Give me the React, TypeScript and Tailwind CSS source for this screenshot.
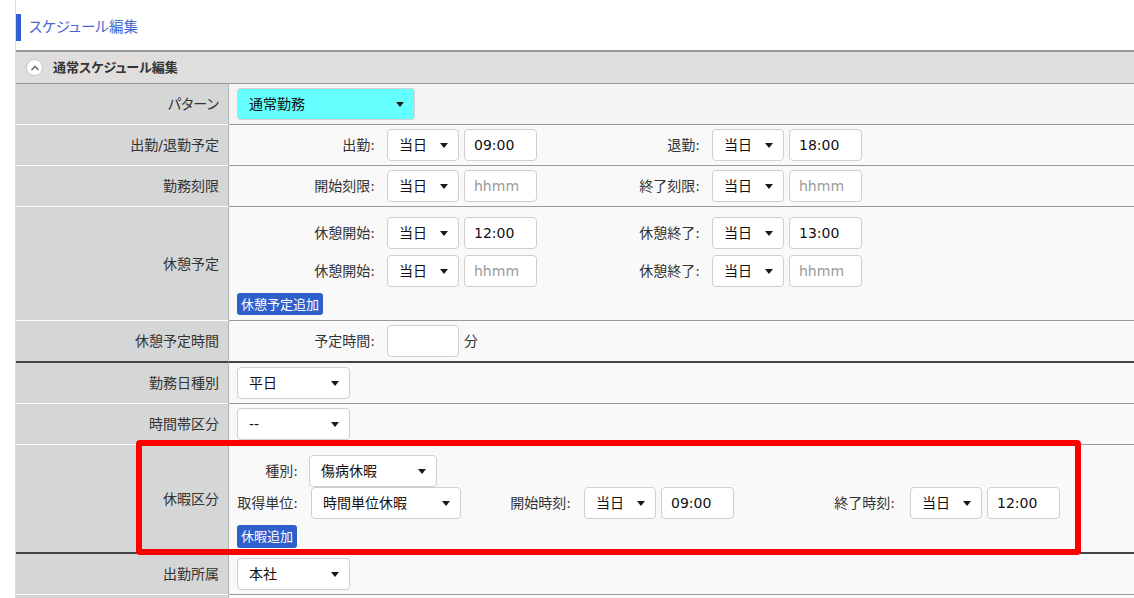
import React from 'react';

// ----------------------------------------------------------------------------
// Small form pieces
// ----------------------------------------------------------------------------

function Caret() {
  return (
    <svg width="8" height="5" viewBox="0 0 8 5" className="shrink-0">
      <path d="M0 0h8L4 5z" fill="#1a1a1a" />
    </svg>
  );
}

interface SelectProps {
  value: string;
  className: string;
}

function Select({ value, className }: SelectProps) {
  return (
    <div
      className={`h-[32px] shrink-0 border border-[#cfcfcf] rounded-[4px] flex items-center justify-between pl-[11px] pr-[10px] text-[14px] text-[#111] ${className}`}
    >
      <span>{value}</span>
      <Caret />
    </div>
  );
}

function TimeInput({ value }: { value?: string }) {
  return (
    <div className="w-[73px] h-[32px] shrink-0 bg-white border border-[#cfcfcf] rounded-[4px] flex items-center pl-[9px] text-[14px]">
      {value ? <span className="text-[#111]">{value}</span> : <span className="text-[#9a9a9a]">hhmm</span>}
    </div>
  );
}

function DayTime({ value }: { value?: string }) {
  return (
    <div className="flex gap-[5px]">
      <Select value="当日" className="w-[72px] bg-white" />
      <TimeInput value={value} />
    </div>
  );
}

function TimeGroup({ label, value }: { label: string; value?: string }) {
  return (
    <div className="w-[325px] shrink-0 flex items-center">
      <span className="w-[146px] text-right text-[#333]">{label}</span>
      <div className="ml-[12px]">
        <DayTime value={value} />
      </div>
    </div>
  );
}

// ----------------------------------------------------------------------------
// Table row
// ----------------------------------------------------------------------------

interface RowProps {
  label?: string;
  thick?: boolean;
  contentClass?: string;
  bgClass?: string;
  children?: React.ReactNode;
}

function Row({ label, thick, contentClass = 'h-[40px] flex items-center pl-[8px]', bgClass = 'bg-[#f9f9f9]', children }: RowProps) {
  return (
    <div className="flex">
      <div
        className={`w-[213px] shrink-0 bg-[#d5d6d6] border-r border-r-[#b4b4b4] flex items-center justify-end pr-[9px] text-[#333] ${
          thick ? 'border-b-2 border-b-[#444]' : 'border-b border-b-white'
        }`}
      >
        {label}
      </div>
      <div className={`flex-1 ${bgClass} ${thick ? 'border-b-2 border-b-[#444]' : 'border-b border-b-[#9a9a9a]'}`}>
        <div className={contentClass}>{children}</div>
      </div>
    </div>
  );
}

// ----------------------------------------------------------------------------
// Page
// ----------------------------------------------------------------------------

export default function App() {
  return (
    <div className="relative w-[1134px] h-[598px] overflow-hidden bg-white font-['DejaVu_Sans','Noto_Sans_CJK_JP',sans-serif] [font-feature-settings:'palt'] text-[14px] leading-none">
      <div className="ml-[15px] h-full border-l border-l-[#dedede] pt-[14px]">
        {/* Title */}
        <div className="flex items-center h-[27px]">
          <div className="w-[5px] h-full bg-[#2f5fd3]" />
          <span className="ml-[8px] text-[14.5px] text-[#4468cf]">スケジュール編集</span>
        </div>

        {/* Section header */}
        <div className="mt-[9px] h-[34px] bg-[#e0dddd] border-t-2 border-t-[#969696] border-b border-b-[#969696] flex items-center pl-[10px]">
          <div className="w-[17px] h-[17px] rounded-full bg-white border border-[#c4c4c4] flex items-center justify-center">
            <svg width="10" height="6" viewBox="0 0 10 6">
              <path d="M1.5 5L5 1.5 8.5 5" fill="none" stroke="#6f6f6f" strokeWidth="1.6" />
            </svg>
          </div>
          <span className="ml-[10px] text-[13px] font-bold text-[#333]">通常スケジュール編集</span>
        </div>

        {/* Rows */}
        <Row label="パターン" bgClass="bg-[#f4f4f4]">
          <Select value="通常勤務" className="w-[178px] bg-[#66ffff] border-[#c8dede]" />
        </Row>

        <Row label="出勤/退勤予定" contentClass="h-[40px] flex items-center">
          <TimeGroup label="出勤:" value="09:00" />
          <TimeGroup label="退勤:" value="18:00" />
        </Row>

        <Row label="勤務刻限" contentClass="h-[40px] flex items-center">
          <TimeGroup label="開始刻限:" />
          <TimeGroup label="終了刻限:" />
        </Row>

        <Row label="休憩予定" contentClass="pt-[10px] pb-[5px] flex flex-col">
          <div className="flex items-center">
            <TimeGroup label="休憩開始:" value="12:00" />
            <TimeGroup label="休憩終了:" value="13:00" />
          </div>
          <div className="flex items-center mt-[6px]">
            <TimeGroup label="休憩開始:" />
            <TimeGroup label="休憩終了:" />
          </div>
          <div className="mt-[6px] ml-[8px]">
            <span className="inline-flex items-center h-[22px] px-[4px] rounded-[3px] bg-[#2e5fca] text-white text-[13px]">
              休憩予定追加
            </span>
          </div>
        </Row>

        <Row label="休憩予定時間" thick contentClass="h-[40px] flex items-center">
          <span className="w-[146px] text-right text-[#333]">予定時間:</span>
          <div className="ml-[12px] w-[72px] h-[32px] bg-white border border-[#cfcfcf] rounded-[4px]" />
          <span className="ml-[5px] text-[#333]">分</span>
        </Row>

        <Row label="勤務日種別">
          <Select value="平日" className="w-[113px] bg-white" />
        </Row>

        <Row label="時間帯区分">
          <Select value="--" className="w-[113px] bg-white" />
        </Row>

        <Row label="休暇区分" thick contentClass="pt-[10px] pb-[4px] pl-[8px] flex flex-col">
          <div className="flex items-center">
            <span className="w-[61px] text-right text-[#333]">種別:</span>
            <Select value="傷病休暇" className="ml-[11px] w-[128px] bg-white" />
          </div>
          <div className="flex items-center">
            <span className="w-[61px] text-right text-[#333]">取得単位:</span>
            <Select value="時間単位休暇" className="ml-[13px] w-[150px] bg-white" />
            <span className="w-[110px] text-right text-[#333]">開始時刻:</span>
            <div className="ml-[13px]">
              <DayTime value="09:00" />
            </div>
            <span className="w-[161px] text-right text-[#333]">終了時刻:</span>
            <div className="ml-[15px]">
              <DayTime value="12:00" />
            </div>
          </div>
          <div className="mt-[6px]">
            <span className="inline-flex items-center h-[23px] px-[4px] rounded-[3px] bg-[#2e5fca] text-white text-[13px]">
              休暇追加
            </span>
          </div>
        </Row>

        <Row label="出勤所属">
          <Select value="本社" className="w-[113px] bg-white" />
        </Row>

        <Row label="" />
      </div>

      {/* Highlight annotation */}
      <div className="absolute left-[136px] top-[440px] w-[945px] h-[115px] border-[6px] border-[#ff0000] rounded-[4px] pointer-events-none" />
    </div>
  );
}
